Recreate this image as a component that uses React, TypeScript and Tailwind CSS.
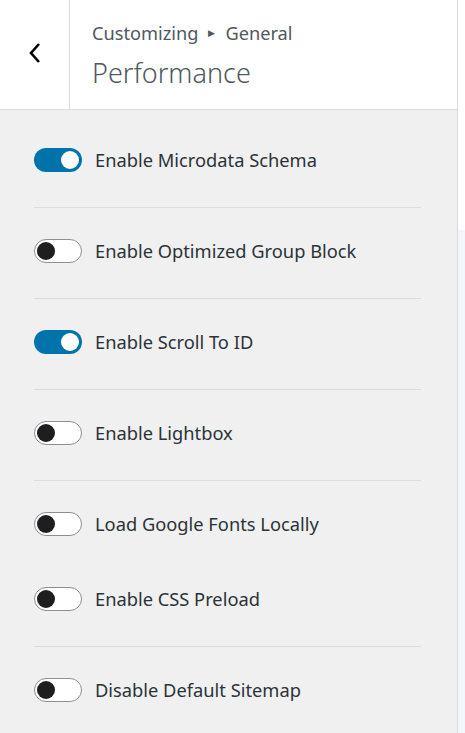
const OPTIONS = [
	{ id: "microdata", label: "Enable Microdata Schema", on: true, sep: true },
	{ id: "group", label: "Enable Optimized Group Block", on: false, sep: true },
	{ id: "scroll", label: "Enable Scroll To ID", on: true, sep: true },
	{ id: "lightbox", label: "Enable Lightbox", on: false, sep: true },
	{ id: "fonts", label: "Load Google Fonts Locally", on: false, sep: false },
	{ id: "preload", label: "Enable CSS Preload", on: false, sep: true },
	{ id: "sitemap", label: "Disable Default Sitemap", on: false, sep: false },
];

function Toggle({ on }: { on: boolean }) {
	return on ? (
		<span className="shrink-0 w-12 h-6 rounded-full bg-[#0073aa] flex items-center justify-end pr-[3px]">
			<span className="w-[18px] h-[18px] rounded-full bg-white" />
		</span>
	) : (
		<span className="shrink-0 w-12 h-6 rounded-full bg-white border border-[#8c8f94] flex items-center pl-[2px]">
			<span className="w-[18px] h-[18px] rounded-full bg-[#1e1e1e]" />
		</span>
	);
}

export default function App() {
	return (
		<div
			className="w-[465px] h-[733px] flex overflow-hidden bg-white"
			style={{ fontFamily: '"Noto Sans", "Open Sans", sans-serif' }}
		>
			<div className="w-[458px] shrink-0 flex flex-col bg-[#f0f0f1] border-r border-[#dcdcde]">
				<div className="h-[110px] shrink-0 flex bg-white border-b border-[#dcdcde]">
					<button className="w-[70px] shrink-0 flex items-center justify-center border-r border-[#dcdcde] pb-[4px]">
						<svg width="14" height="22" viewBox="0 0 14 22" fill="none">
							<path d="M11 2 L3 11 L11 20" stroke="#000" strokeWidth="2.6" />
						</svg>
					</button>
					<div className="pl-[22px] pt-[19px]">
						<div className="flex items-center text-[18.2px] text-[#50575e] leading-[28px]">
							<span>Customizing</span>
							<span className="text-[9px] mx-[10px]">▶</span>
							<span>General</span>
						</div>
						<div className="text-[27px] font-light text-[#50575e] leading-[36px] mt-[8px]">
							Performance
						</div>
					</div>
				</div>
				<ul className="pl-[34px] pr-[36px] pt-[38px] flex flex-col">
					{OPTIONS.map((o, i) => (
						<li key={o.id} className="flex flex-col">
							<div className="flex items-center gap-[13px] h-6">
								<Toggle on={o.on} />
								<span className="text-[18.3px] text-[#2c3338] whitespace-nowrap">
									{o.label}
								</span>
							</div>
							{o.sep ? (
								<div className="mt-[35px] mb-[31px] h-px bg-[#dcdcde]" />
							) : i < OPTIONS.length - 1 ? (
								<div className="h-[51px]" />
							) : null}
						</li>
					))}
				</ul>
			</div>
			<div className="flex-1 flex flex-col">
				<div className="h-[230px] bg-white" />
				<div className="flex-1 bg-[#f3f6fa]" />
			</div>
		</div>
	);
}
